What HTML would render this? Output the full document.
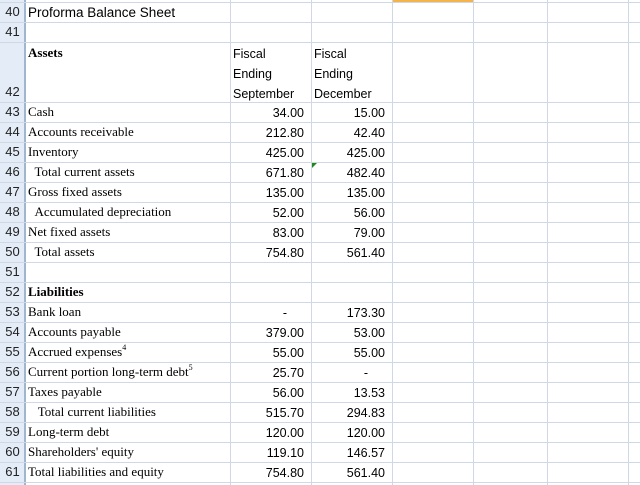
<!DOCTYPE html>
<html><head><meta charset="utf-8"><style>
*{margin:0;padding:0;box-sizing:border-box}
body{width:640px;height:485px;background:#fff;position:relative;overflow:hidden;font-family:"Liberation Sans",sans-serif}
.hdr{position:absolute;left:0;top:0;width:25px;height:485px;background:#e4ecf7;border-right:1px solid #9eb6ce}
.vl{position:absolute;top:0;height:485px;width:1px;background:#d0d7e5}
.hl{position:absolute;left:0;width:640px;height:1px;background:#d0d7e5}
.rn{position:absolute;left:0;width:25px;font-size:13px;color:#222;text-align:center;line-height:20px}
.t{position:absolute;white-space:nowrap}
.s{font-family:"Liberation Serif",serif;font-size:13px;color:#000}
.c{font-size:12.5px;color:#000}
.ti{font-size:13.5px;color:#000}
.n{text-align:right;width:70px}
sup{font-size:8px;vertical-align:6px;line-height:0}
</style></head><body>
<div class="hdr"></div>
<div style="position:absolute;left:392px;top:0;width:81px;height:3px;background:#f5b34c"></div>
<div class="vl" style="left:25px;background:#9eb6ce"></div>
<div class="vl" style="left:230px"></div>
<div class="vl" style="left:311px"></div>
<div class="vl" style="left:392px"></div>
<div class="vl" style="left:473px"></div>
<div class="vl" style="left:547px"></div>
<div class="vl" style="left:628px"></div>
<div id="g"></div>
<script>
var lines=[2,22,42,102];for(var y=122;y<=482;y+=20)lines.push(y);
var h='';lines.forEach(function(y){h+='<div class="hl" style="top:'+y+'px"></div>'});
var rows=[
[40,'Proforma Balance Sheet','','','c'],
[41,'','','',''],
[42,'<b>Assets</b>','','',''],
[43,'Cash','34.00','15.00'],
[44,'Accounts receivable','212.80','42.40'],
[45,'Inventory','425.00','425.00'],
[46,'&nbsp;&nbsp;Total current assets','671.80','482.40'],
[47,'Gross fixed assets','135.00','135.00'],
[48,'&nbsp;&nbsp;Accumulated depreciation','52.00','56.00'],
[49,'Net fixed assets','83.00','79.00'],
[50,'&nbsp;&nbsp;Total assets','754.80','561.40'],
[51,'','',''],
[52,'<b>Liabilities</b>','',''],
[53,'Bank loan','-','173.30'],
[54,'Accounts payable','379.00','53.00'],
[55,'Accrued expenses<sup>4</sup>','55.00','55.00'],
[56,'Current portion long-term debt<sup>5</sup>','25.70','-'],
[57,'Taxes payable','56.00','13.53'],
[58,'&nbsp;&nbsp;&nbsp;Total current liabilities','515.70','294.83'],
[59,'Long-term debt','120.00','120.00'],
[60,"Shareholders' equity",'119.10','146.57'],
[61,'Total liabilities and equity','754.80','561.40']];
rows.forEach(function(r){
 var n=r[0],top,hh;
 if(n==40){top=2;hh=20}else if(n==41){top=22;hh=20}else if(n==42){top=42;hh=60}else{top=102+(n-43)*20;hh=20}
 h+='<div class="rn" style="top:'+(top+hh-20)+'px">'+n+'</div>';
 if(n==40){h+='<div class="t ti" style="left:28px;top:'+(top+3)+'px">'+r[1]+'</div>';return}
 if(n==42){h+='<div class="t s" style="left:28px;top:45px">'+r[1]+'</div>';
  h+='<div class="t c" style="left:233px;top:44px;line-height:20px">Fiscal<br>Ending<br>September</div>';
  h+='<div class="t c" style="left:314px;top:44px;line-height:20px">Fiscal<br>Ending<br>December</div>';return}
 if(r[1])h+='<div class="t s" style="left:28px;top:'+(top+2)+'px">'+r[1]+'</div>';
 var nt=top+4;
 if(r[2]){var dash=r[2]=='-';h+='<div class="t c n" style="left:'+(dash?217:234)+'px;top:'+nt+'px">'+r[2]+'</div>'}
 if(r[3]){var dash2=r[3]=='-';h+='<div class="t c n" style="left:'+(dash2?298:315)+'px;top:'+nt+'px">'+r[3]+'</div>'}
});
document.getElementById('g').innerHTML=h;
</script>
<div style="position:absolute;left:312px;top:163px;width:0;height:0;border-top:5px solid #1e8a1e;border-right:5px solid transparent"></div>
</body></html>
